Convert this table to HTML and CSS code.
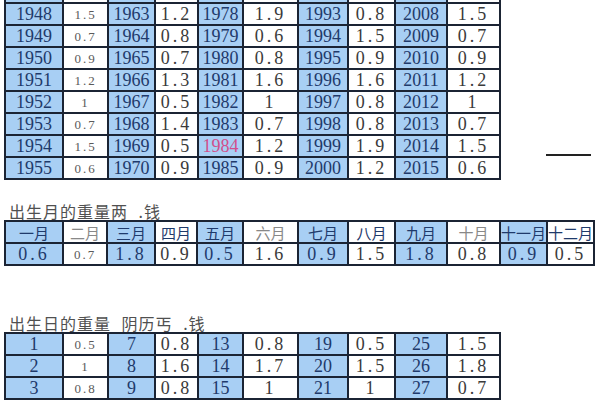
FILE: index.html
```html
<!DOCTYPE html>
<html lang="en">
<head>
<meta charset="utf-8">
<title>称骨重量表</title>
<link rel="stylesheet" href="styles.css">
</head>
<body>
<div class="page">
  <div class="top">
    <table class="grid years">
      <colgroup>
        <col class="w1"><col class="w2"><col class="w3"><col class="w4"><col class="w5">
        <col class="w6"><col class="w7"><col class="w8"><col class="w9"><col class="w10">
      </colgroup>
      <tr class="head"><td class="b"></td><td></td><td class="b"></td><td></td><td class="b"></td><td></td><td class="b"></td><td></td><td class="b"></td><td></td></tr>
      <tr><td class="b y">1948</td><td class="s">1.5</td><td class="b y">1963</td><td class="v">1.2</td><td class="b y">1978</td><td class="v">1.9</td><td class="b y">1993</td><td class="v">0.8</td><td class="b y">2008</td><td class="v">1.5</td></tr>
      <tr><td class="b y">1949</td><td class="s">0.7</td><td class="b y">1964</td><td class="v">0.8</td><td class="b y">1979</td><td class="v">0.6</td><td class="b y">1994</td><td class="v">1.5</td><td class="b y">2009</td><td class="v">0.7</td></tr>
      <tr><td class="b y">1950</td><td class="s">0.9</td><td class="b y">1965</td><td class="v">0.7</td><td class="b y">1980</td><td class="v">0.8</td><td class="b y">1995</td><td class="v">0.9</td><td class="b y">2010</td><td class="v">0.9</td></tr>
      <tr><td class="b y">1951</td><td class="s">1.2</td><td class="b y">1966</td><td class="v">1.3</td><td class="b y">1981</td><td class="v">1.6</td><td class="b y">1996</td><td class="v">1.6</td><td class="b y">2011</td><td class="v">1.2</td></tr>
      <tr><td class="b y">1952</td><td class="s">1</td><td class="b y">1967</td><td class="v">0.5</td><td class="b y">1982</td><td class="v">1</td><td class="b y">1997</td><td class="v">0.8</td><td class="b y">2012</td><td class="v">1</td></tr>
      <tr><td class="b y">1953</td><td class="s">0.7</td><td class="b y">1968</td><td class="v">1.4</td><td class="b y">1983</td><td class="v">0.7</td><td class="b y">1998</td><td class="v">0.8</td><td class="b y">2013</td><td class="v">0.7</td></tr>
      <tr><td class="b y">1954</td><td class="s">1.5</td><td class="b y">1969</td><td class="v">0.5</td><td class="b y pink">1984</td><td class="v">1.2</td><td class="b y">1999</td><td class="v">1.9</td><td class="b y">2014</td><td class="v">1.5</td></tr>
      <tr><td class="b y">1955</td><td class="s">0.6</td><td class="b y">1970</td><td class="v">0.9</td><td class="b y">1985</td><td class="v">0.9</td><td class="b y">2000</td><td class="v">1.2</td><td class="b y">2015</td><td class="v">0.6</td></tr>
    </table>
    <div class="dash"></div>
  </div>

  <div class="caption cap1" lang="zh">出生月的重量两 .钱</div>
  <table class="grid months">
    <colgroup>
      <col class="m1"><col class="m2"><col class="m3"><col class="m4"><col class="m5"><col class="m6">
      <col class="m7"><col class="m8"><col class="m9"><col class="m10"><col class="m11"><col class="m12">
    </colgroup>
    <tr class="mh" lang="zh"><td class="b">一月</td><td class="lt">二月</td><td class="b">三月</td><td>四月</td><td class="b">五月</td><td class="lt">六月</td><td class="b">七月</td><td>八月</td><td class="b">九月</td><td class="lt">十月</td><td class="b">十一月</td><td>十二月</td></tr>
    <tr><td class="b yv v">0.6</td><td class="s">0.7</td><td class="b yv v">1.8</td><td class="v">0.9</td><td class="b yv v">0.5</td><td class="v">1.6</td><td class="b yv v">0.9</td><td class="v">1.5</td><td class="b yv v">1.8</td><td class="v">0.8</td><td class="b yv v">0.9</td><td class="v">0.5</td></tr>
  </table>

  <div class="caption cap2" lang="zh">出生日的重量 阴历丐 .钱</div>
  <table class="grid days">
    <colgroup>
      <col class="w1"><col class="w2"><col class="w3"><col class="w4"><col class="w5">
      <col class="w6"><col class="w7"><col class="w8"><col class="w9"><col class="w10">
    </colgroup>
    <tr><td class="b y">1</td><td class="s">0.5</td><td class="b y">7</td><td class="v">0.8</td><td class="b y">13</td><td class="v">0.8</td><td class="b y">19</td><td class="v">0.5</td><td class="b y">25</td><td class="v">1.5</td></tr>
    <tr><td class="b y">2</td><td class="s">1</td><td class="b y">8</td><td class="v">1.6</td><td class="b y">14</td><td class="v">1.7</td><td class="b y">20</td><td class="v">1.5</td><td class="b y">26</td><td class="v">1.8</td></tr>
    <tr><td class="b y">3</td><td class="s">0.8</td><td class="b y">9</td><td class="v">0.8</td><td class="b y">15</td><td class="v">1</td><td class="b y">21</td><td class="v">1</td><td class="b y">27</td><td class="v">0.7</td></tr>
  </table>
</div>
</body>
</html>
```

FILE: styles.css
```css
html, body {
  margin: 0;
  padding: 0;
  background: #ffffff;
}

body {
  font-family: "Liberation Serif", "Times New Roman", "DejaVu Serif", serif;
  color: #333;
}

.page {
  padding-left: 4px;
}

.top {
  display: flex;
  align-items: flex-start;
}

.grid {
  border-collapse: collapse;
  table-layout: fixed;
}

.grid td {
  font-family: "Liberation Serif", "Times New Roman", serif;
  border: 2px solid #1b2434;
  padding: 0;
  text-align: center;
  vertical-align: middle;
  white-space: nowrap;
  overflow: visible;
  line-height: 1;
}

.years {
  margin-top: -20px;
}

.years tr {
  height: 22px;
}

.w1 { width: 58px; }
.w2 { width: 45px; }
.w3 { width: 47px; }
.w4 { width: 43px; }
.w5 { width: 45px; }
.w6 { width: 55px; }
.w7 { width: 50px; }
.w8 { width: 47px; }
.w9 { width: 52px; }
.w10 { width: 53px; }

.m1 { width: 58px; }
.m2 { width: 44px; }
.m3 { width: 48px; }
.m4 { width: 42px; }
.m5 { width: 46px; }
.m6 { width: 55px; }
.m7 { width: 50px; }
.m8 { width: 47px; }
.m9 { width: 52px; }
.m10 { width: 53px; }
.m11 { width: 47px; }
.m12 { width: 46px; }

.b {
  background: #a8cff4;
}

.grid td.y {
  font-size: 18px;
  color: #1f3a6b;
}

.grid td.pink {
  color: #d24e8c;
}

.grid td.v {
  font-size: 18px;
  letter-spacing: 3px;
  color: #3a3a3a;
}

.grid td.yv {
  color: #1f3a6b;
}

.grid td.s {
  font-size: 13px;
  letter-spacing: 2px;
  color: #5a5a5a;
}

.dash {
  width: 45px;
  height: 0;
  border-top: 2px solid #222;
  margin-left: 45px;
  margin-top: 154px;
}

.caption {
  font-family: "Noto Sans CJK SC", sans-serif;
  font-size: 16px;
  line-height: 18px;
  letter-spacing: 1px;
  word-spacing: 6px;
  color: #505050;
  padding-left: 5px;
}

.cap1 {
  margin-top: 22px;
}

.cap2 {
  margin-top: 48px;
}

.months tr {
  height: 22px;
}

.grid .mh td {
  font-family: "Noto Sans CJK SC", sans-serif;
  font-size: 15px;
  color: #1f3a6b;
}

.grid .mh td.lt {
  color: #888;
}

.days tr {
  height: 22px;
}
```
